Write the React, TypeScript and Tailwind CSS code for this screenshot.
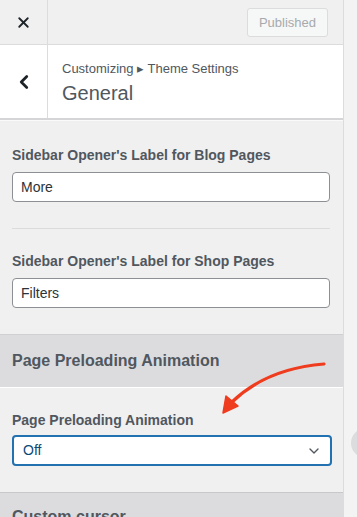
import { X, ChevronLeft, ChevronDown } from 'lucide-react'

const font = { fontFamily: '"Liberation Sans", Arial, sans-serif' }

function TextField({ label, value, top }: { label: string; value: string; top: string }) {
  return (
    <div className={top}>
      <div className="text-[14px] font-bold text-[#50575e] leading-[18px]">{label}</div>
      <div className="mt-[8px] h-[30px] w-[318px] rounded-[4px] border border-[#8c8f94] bg-white px-[8px] flex items-center text-[14px] text-[#2c3338]">
        {value}
      </div>
    </div>
  )
}

export default function App() {
  return (
    <div className="w-[357px] h-[517px] flex bg-[#f3f3f3] overflow-hidden relative" style={font}>
      <div className="w-[344px] shrink-0 border-r border-[#dcdcde] bg-[#f0f0f1] flex flex-col [&>*]:shrink-0">
        {/* top bar */}
        <div className="h-[45px] flex border-b border-[#dcdcde] bg-[#f0f0f1]">
          <div className="w-[48px] border-r border-[#dcdcde] flex items-center justify-center text-[#1d2327]">
            <X size={17} strokeWidth={2.6} />
          </div>
          <div className="flex-1 flex items-start justify-end pr-[15px] pt-[8px]">
            <div className="h-[29px] w-[81px] rounded-[3px] border border-[#dcdcde] bg-[#f6f7f7] text-[#a7aaad] text-[13px] flex items-center justify-center">
              Published
            </div>
          </div>
        </div>

        {/* breadcrumb */}
        <div className="h-[73px] flex bg-white">
          <div className="w-[48px] border-r border-[#dcdcde] flex items-center justify-center text-[#1d2327]">
            <ChevronLeft size={22} strokeWidth={3} />
          </div>
          <div className="pl-[14px] pt-[15px]">
            <div className="text-[13px] text-[#50575e] leading-[17px]">Customizing ▸ Theme Settings</div>
            <div className="mt-[4px] text-[20px] font-light text-[#50575e] leading-[24px]">General</div>
          </div>
        </div>
        <div className="h-[2px] bg-[#d5d5d7]" />
        <div className="h-[1px] bg-[#fafafa]" />

        {/* content */}
        <div className="px-[12px]">
          <TextField label="Sidebar Opener's Label for Blog Pages" value="More" top="pt-[25px]" />
          <div className="mt-[26px] h-px w-[318px] bg-[#dcdcde]" />
          <TextField label="Sidebar Opener's Label for Shop Pages" value="Filters" top="pt-[23px]" />
        </div>

        <div className="mt-[26px] border-t border-[#d0d0d2] h-[53px] bg-[#dcdcde] px-[12px] flex items-center">
          <span className="text-[16px] font-bold text-[#50575e]">Page Preloading Animation</span>
        </div>
        <div className="h-[1px] bg-white" />

        <div className="px-[12px] pt-[23px]">
          <div className="text-[14px] font-bold text-[#50575e] leading-[18px]">Page Preloading Animation</div>
          <div className="mt-[6px] h-[31px] w-[320px] rounded-[4px] border-2 border-[#2271b1] bg-white pl-[9px] pr-[8px] flex items-center justify-between text-[14px] text-[#0a4b78]">
            <span>Off</span>
            <ChevronDown size={16} strokeWidth={2} className="text-[#50575e]" />
          </div>
        </div>

        <div className="mt-[26px] border-t border-[#c8c8ca] !shrink grow min-h-[40px] bg-[#dcdcde] px-[12px] pt-[12px]">
          <span className="text-[16px] font-bold text-[#50575e]">Custom cursor</span>
        </div>
      </div>
      <div className="flex-1" />

      {/* collapse handle peeking at the edge */}
      <div className="absolute left-[351px] top-[428px] w-[30px] h-[30px] rounded-full bg-[#dcdcde]" />

      {/* annotation arrow */}
      <svg className="absolute left-0 top-0 pointer-events-none" width="357" height="517" viewBox="0 0 357 517">
        <path d="M324 364 C 285 367, 255 380, 232 402" fill="none" stroke="#f03c1e" strokeWidth="3.2" strokeLinecap="round" />
        <path d="M223 413 L 226 396 L 238 406 Z" fill="#f03c1e" stroke="#f03c1e" strokeWidth="1.5" strokeLinejoin="round" />
      </svg>
    </div>
  )
}
